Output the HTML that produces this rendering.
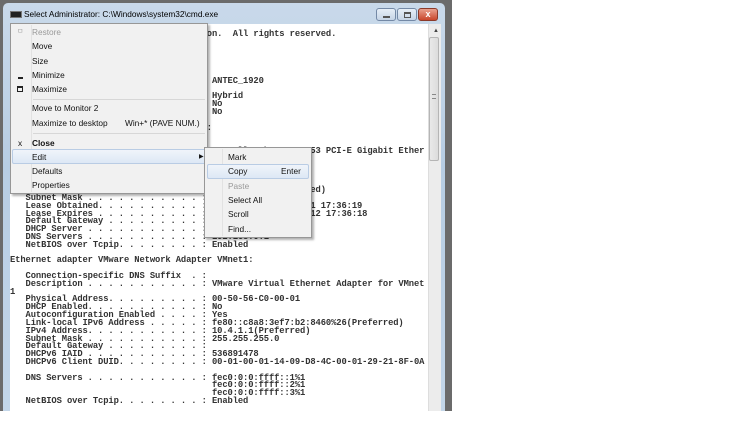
<!DOCTYPE html>
<html><head><meta charset="utf-8"><style>
*{margin:0;padding:0;box-sizing:border-box}
body{width:750px;height:422px;background:#fff;position:relative;overflow:hidden;font-family:"Liberation Sans",sans-serif}
.outer{position:absolute;left:0;top:0;width:452px;height:411px;background:#6b6b6b}
.frame{position:absolute;left:3px;top:3px;width:442px;height:408px;background:linear-gradient(#c9d9ea,#b7cde3 40%,#c3d6e9);border-radius:5px 5px 0 0}
.title{position:absolute;left:24px;top:9px;font-size:8.3px;color:#000}
.ticon{position:absolute;left:10px;top:11px;width:12px;height:7px;background:#222;border:1px solid #777}
.btn{position:absolute;top:8px;height:13px;border:1px solid #7489a6;border-radius:3px;background:linear-gradient(#e6eef7,#c5d4e6)}
.con{position:absolute;left:10px;top:24px;width:418px;height:387px;background:#fff;overflow:hidden}
pre{position:absolute;left:0;top:-1px;font-family:"Liberation Mono",monospace;font-weight:bold;font-size:8.8px;line-height:7.82px;color:#333;letter-spacing:-0.1px}
.sb{position:absolute;left:428px;top:24px;width:13px;height:387px;background:#ececec;border-left:1px solid #ddd}
.thumb{position:absolute;left:429px;top:37px;width:10px;height:124px;background:linear-gradient(90deg,#e9e9e9,#dcdcdc);border:1px solid #b5b5b5;border-radius:2px}
.menu{position:absolute;background:#f1f1f1;border:1px solid #979797;box-shadow:2px 2px 2px rgba(0,0,0,.3);font-size:8.3px;color:#111}
.menu div.i{position:absolute;left:0;right:0;height:14px;line-height:14px;padding-left:21px}
.hl{position:absolute;background:linear-gradient(#f0f4fa,#dde8f5);border:1px solid #b9cce4;border-radius:2px}
.sep{position:absolute;height:1px;background:#d7d7d7}
</style></head><body>
<div class="outer"></div>
<div class="frame"></div>
<div class="ticon"></div>
<div class="title">Select Administrator: C:\Windows\system32\cmd.exe</div>
<div class="btn" style="left:376px;width:20px"><div style="position:absolute;left:6px;top:7px;width:7px;height:2px;background:#555"></div></div>
<div class="btn" style="left:397px;width:20px"><div style="position:absolute;left:6px;top:3px;width:7px;height:6px;border:1px solid #555;border-top-width:2px"></div></div>
<div class="btn" style="left:418px;width:20px;background:linear-gradient(#e9a08e,#c9462c);border-color:#8b3a2a;color:#fff;font-size:9px;text-align:center;line-height:11px;font-weight:bold">x</div>
<div class="con"><pre>Microsoft Windows [Version 6.1.7601]
Copyright (c) 2009 Microsoft Corporation.  All rights reserved.

C:\Windows\system32>ipconfig /all

Windows IP Configuration

   Host Name . . . . . . . . . . . . : ANTEC_1920
   Primary Dns Suffix  . . . . . . . :
   Node Type . . . . . . . . . . . . : Hybrid
   IP Routing Enabled. . . . . . . . : No
   WINS Proxy Enabled. . . . . . . . : No

Ethernet adapter Local Area Connection:

   Connection-specific DNS Suffix  . :
   Description . . . . . . . . . . . : Marvell Yukon 88E8053 PCI-E Gigabit Ether
net Controller
   Physical Address. . . . . . . . . : 00-1A-92-11-22-33
   DHCP Enabled. . . . . . . . . . . : Yes
   Autoconfiguration Enabled . . . . : Yes
   IPv4 Address. . . . . . . . . . . : 192.168.0.5(Preferred)
   Subnet Mask . . . . . . . . . . . : 255.255.255.0
   Lease Obtained. . . . . . . . . . : Monday, May 02, 2011 17:36:19
   Lease Expires . . . . . . . . . . : Tuesday, May 03, 2012 17:36:18
   Default Gateway . . . . . . . . . : 192.168.0.1
   DHCP Server . . . . . . . . . . . : 192.168.0.1
   DNS Servers . . . . . . . . . . . : 192.168.0.1
   NetBIOS over Tcpip. . . . . . . . : Enabled

Ethernet adapter VMware Network Adapter VMnet1:

   Connection-specific DNS Suffix  . :
   Description . . . . . . . . . . . : VMware Virtual Ethernet Adapter for VMnet
1
   Physical Address. . . . . . . . . : 00-50-56-C0-00-01
   DHCP Enabled. . . . . . . . . . . : No
   Autoconfiguration Enabled . . . . : Yes
   Link-local IPv6 Address . . . . . : fe80::c8a8:3ef7:b2:8460%26(Preferred)
   IPv4 Address. . . . . . . . . . . : 10.4.1.1(Preferred)
   Subnet Mask . . . . . . . . . . . : 255.255.255.0
   Default Gateway . . . . . . . . . :
   DHCPv6 IAID . . . . . . . . . . . : 536891478
   DHCPv6 Client DUID. . . . . . . . : 00-01-00-01-14-09-D8-4C-00-01-29-21-8F-0A

   DNS Servers . . . . . . . . . . . : fec0:0:0:ffff::1%1
                                       fec0:0:0:ffff::2%1
                                       fec0:0:0:ffff::3%1
   NetBIOS over Tcpip. . . . . . . . : Enabled</pre></div>
<div class="sb"><div style="position:absolute;left:4px;top:4px;font-size:6px;color:#444">▲</div></div>
<div class="thumb"><div style="position:absolute;left:2px;top:56px;width:4px;height:5px;border-top:1px solid #888;border-bottom:1px solid #888"></div></div>

<div class="menu" style="left:10px;top:23px;width:198px;height:171px">
 <div style="position:absolute;left:20px;top:1px;bottom:1px;width:1px;background:#e2e2e2"></div>
 <div class="i" style="top:1px;color:#999">Restore<span style="position:absolute;left:6px;color:#aaa;font-size:7px">ㅁ</span></div>
 <div class="i" style="top:15px">Move</div>
 <div class="i" style="top:30px">Size</div>
 <div class="i" style="top:44px">Minimize<span style="position:absolute;left:7px;top:9px;width:5px;height:2px;background:#222"></span></div>
 <div class="i" style="top:58px">Maximize<span style="position:absolute;left:6px;top:4px;width:6px;height:6px;border:1px solid #222;border-top-width:2px"></span></div>
 <div class="sep" style="left:22px;right:2px;top:75px"></div>
 <div class="i" style="top:77px">Move to Monitor 2</div>
 <div class="i" style="top:92px">Maximize to desktop<span style="position:absolute;left:114px">Win+* (PAVE NUM.)</span></div>
 <div class="sep" style="left:22px;right:2px;top:109px"></div>
 <div class="i" style="top:112px;font-weight:bold">Close<span style="position:absolute;left:7px;font-weight:normal">x</span></div>
 <div class="hl" style="left:1px;right:1px;top:125px;height:15px"></div>
 <div class="i" style="top:126px">Edit<span style="position:absolute;left:188px;font-size:6px">▶</span></div>
 <div class="i" style="top:140px">Defaults</div>
 <div class="i" style="top:154px">Properties</div>
</div>

<div class="menu" style="left:204px;top:147px;width:108px;height:91px">
 <div style="position:absolute;left:17px;top:1px;bottom:1px;width:1px;background:#e2e2e2"></div>
 <div class="hl" style="left:2px;right:2px;top:16px;height:15px"></div>
 <div class="i" style="top:2px;padding-left:23px">Mark</div>
 <div class="i" style="top:16px;padding-left:23px">Copy<span style="position:absolute;left:76px">Enter</span></div>
 <div class="i" style="top:31px;padding-left:23px;color:#999">Paste</div>
 <div class="i" style="top:45px;padding-left:23px">Select All</div>
 <div class="i" style="top:59px;padding-left:23px">Scroll</div>
 <div class="i" style="top:74px;padding-left:23px">Find...</div>
</div>
</body></html>
